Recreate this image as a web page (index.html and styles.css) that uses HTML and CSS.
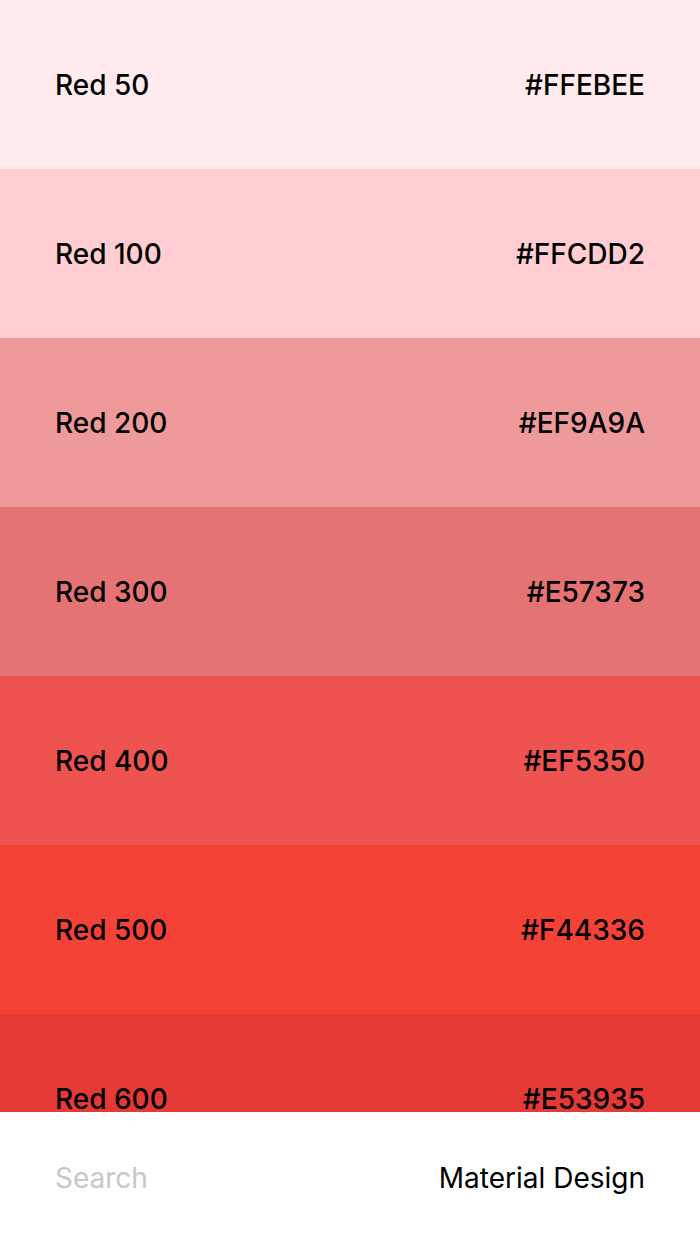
FILE: index.html
```html
<!DOCTYPE html>
<html>
<head>
<meta charset="utf-8">
<link rel="stylesheet" href="styles.css">
</head>
<body>
<div class="app">
  <div class="list">
    <div class="row r50"><span>Red 50</span><span>#FFEBEE</span></div>
    <div class="row r100"><span>Red 100</span><span>#FFCDD2</span></div>
    <div class="row r200"><span>Red 200</span><span>#EF9A9A</span></div>
    <div class="row r300"><span>Red 300</span><span>#E57373</span></div>
    <div class="row r400"><span>Red 400</span><span>#EF5350</span></div>
    <div class="row r500"><span>Red 500</span><span>#F44336</span></div>
    <div class="row r600"><span>Red 600</span><span>#E53935</span></div>
  </div>
  <div class="bar">
    <span class="search">Search</span>
    <span class="title">Material Design</span>
  </div>
</div>
</body>
</html>
```
FILE: styles.css
```css
html, body {
  margin: 0;
  padding: 0;
  background: #ffffff;
}
.app {
  width: 700px;
  height: 1244px;
  display: flex;
  flex-direction: column;
  font-family: Inter, "Liberation Sans", sans-serif;
  color: #000;
}
.list {
  height: 1112px;
  overflow: hidden;
  flex: none;
}
.row {
  height: 169px;
  display: flex;
  align-items: center;
  justify-content: space-between;
  padding: 0 55px;
  font-size: 28px;
  font-weight: 500;
  line-height: 34px;
}
.r50 { background: #FFEBEE; }
.r100 { background: #FFCDD2; }
.r200 { background: #EF9A9A; }
.r300 { background: #E57373; }
.r400 { background: #EF5350; }
.r500 { background: #F44336; }
.r600 { background: #E53935; }
.bar {
  flex: 1;
  display: flex;
  align-items: center;
  justify-content: space-between;
  padding: 0 55px;
  font-size: 28px;
  line-height: 34px;
}
.search { color: #c7c7c7; }
.title { color: #000; }
```
